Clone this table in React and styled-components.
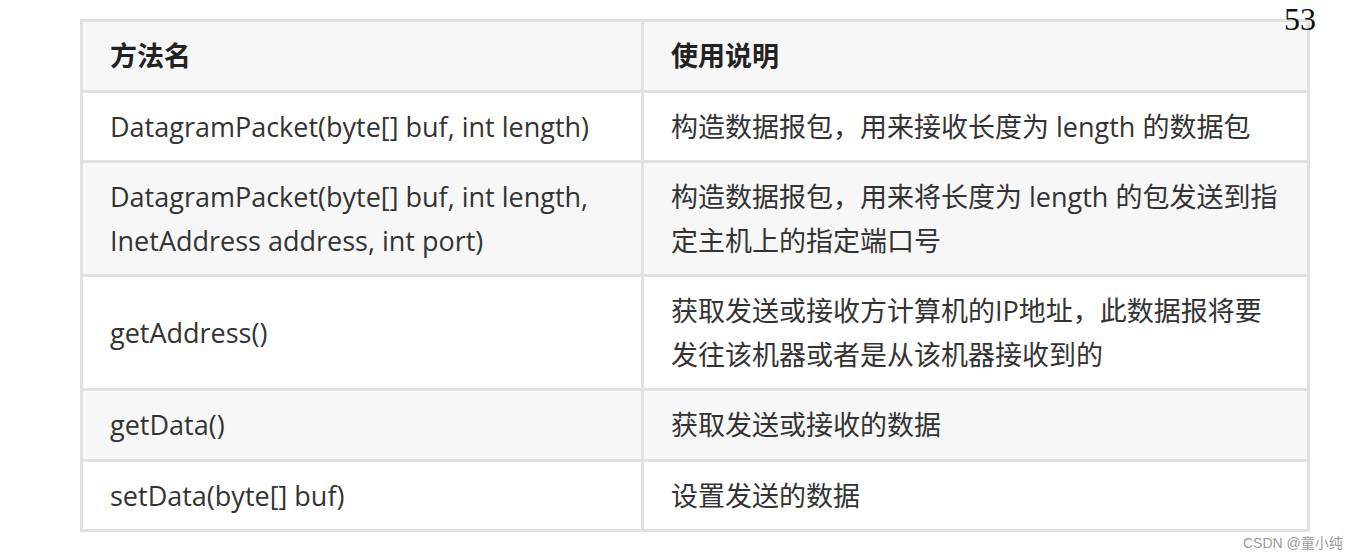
import styled, { createGlobalStyle } from "styled-components";

const GlobalStyle = createGlobalStyle`
  html, body {
    margin: 0;
    padding: 0;
    background: #ffffff;
  }
`;

const Page = styled.div`
  position: relative;
  width: 1359px;
  height: 560px;
  padding: 19px 0 0 80px;
  box-sizing: border-box;
  font-family: "Open Sans", "Noto Sans CJK SC", sans-serif;
  color: #333333;
`;

const Table = styled.table`
  width: 1230px;
  border-collapse: collapse;
  table-layout: fixed;
  border: 3px solid #dfe2e5;
`;

const Row = styled.tr`
  background: ${(props) => (props.shaded ? "#f7f7f7" : "#ffffff")};
`;

const Cell = styled.td`
  border: 3px solid #dfe2e5;
  padding: 12px 24px 12px 27px;
  font-size: 27px;
  line-height: 43.5px;
  vertical-align: middle;
`;

const HeadCell = styled(Cell).attrs({ as: "th" })`
  text-align: left;
  font-weight: 700;
  color: #222;
`;

const PageNumber = styled.span`
  position: absolute;
  top: 0;
  left: 1284px;
  font-family: "Liberation Serif", "DejaVu Serif", serif;
  font-size: 32px;
  line-height: 38px;
  color: #111;
`;

const Watermark = styled.span`
  position: absolute;
  top: 534px;
  left: 1243px;
  font-family: "Liberation Sans", "Noto Sans CJK SC", sans-serif;
  font-size: 14px;
  line-height: 18px;
  color: #9a9a9a;
`;

const rows = [
  ["DatagramPacket(byte[] buf, int length)", "构造数据报包，用来接收长度为 length 的数据包"],
  [
    "DatagramPacket(byte[] buf, int length, InetAddress address, int port)",
    "构造数据报包，用来将长度为 length 的包发送到指定主机上的指定端口号",
  ],
  ["getAddress()", "获取发送或接收方计算机的IP地址，此数据报将要发往该机器或者是从该机器接收到的"],
  ["getData()", "获取发送或接收的数据"],
  ["setData(byte[] buf)", "设置发送的数据"],
];

export default function App() {
  return (
    <>
      <GlobalStyle />
      <Page>
        <Table>
          <colgroup>
            <col style={{ width: 561 }} />
            <col />
          </colgroup>
          <thead>
            <Row shaded>
              <HeadCell>方法名</HeadCell>
              <HeadCell>使用说明</HeadCell>
            </Row>
          </thead>
          <tbody>
            {rows.map((r, i) => (
              <Row key={i} shaded={i % 2 === 1}>
                <Cell>{r[0]}</Cell>
                <Cell>{r[1]}</Cell>
              </Row>
            ))}
          </tbody>
        </Table>
        <PageNumber>53</PageNumber>
        <Watermark>CSDN @童小纯</Watermark>
      </Page>
    </>
  );
}
